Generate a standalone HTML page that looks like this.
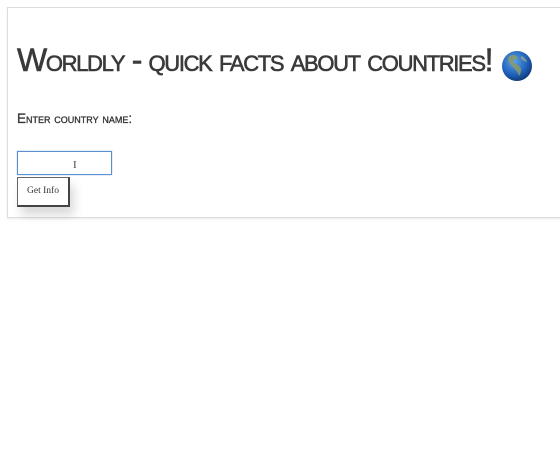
<!DOCTYPE html>
<html><head><style>
html,body{margin:0;padding:0;background:#fff;width:560px;height:450px;overflow:hidden;}
.card{position:absolute;left:7px;top:7px;width:600px;height:209px;border:1px solid #dcdcdc;box-shadow:0 1px 2px rgba(0,0,0,0.08);background:#fff;}
h1{position:absolute;left:17px;top:42px;margin:0;font:normal 32px "Liberation Sans",sans-serif;font-variant:small-caps;letter-spacing:-1.35px;color:#3a3a3a;white-space:nowrap;-webkit-text-stroke:0.6px #3a3a3a;}
.globe{position:absolute;left:501px;top:50px;}
.lbl{position:absolute;left:17px;top:111px;font:normal 13.5px "Liberation Sans",sans-serif;font-variant:small-caps;color:#333;white-space:nowrap;-webkit-text-stroke:0.3px #333;}
.inp{position:absolute;left:17px;top:151px;width:93px;height:22px;border:1px solid #5a8fd0;box-shadow:0 0 1px #7aa8e0;background:#fff;}
.cur{position:absolute;left:55px;top:7px;font:11px "Liberation Serif",serif;color:#444;}
.btn{position:absolute;left:17px;top:177px;width:50px;height:27px;border:1px solid #666;border-right:2px solid #444;border-bottom:2px solid #444;background:#fff;box-shadow:4px 8px 10px rgba(0,0,0,0.15);font:9.5px "Liberation Serif",serif;color:#333;text-align:center;line-height:27px;}
</style></head><body>
<div class="card"></div>
<h1>Worldly - quick facts about countries!</h1>
<svg class="globe" width="32" height="32" viewBox="0 0 32 32">
<defs><radialGradient id="g" cx="40%" cy="35%" r="65%"><stop offset="0" stop-color="#5da2ea"/><stop offset="0.7" stop-color="#1d5fb8"/><stop offset="1" stop-color="#123d7a"/></radialGradient></defs>
<circle cx="16" cy="16" r="15" fill="url(#g)"/>
<path d="M8 6 C12 4 16 5 17 8 C15 10 13 9 12 12 C14 14 17 14 19 17 C21 19 20 23 18 26 C17 22 14 20 12 17 C10 15 8 13 7 10 Z" fill="#8a9a6a" opacity="0.85"/>
<path d="M20 6 C23 7 25 9 26 12 C24 12 22 10 20 9 Z" fill="#9aa87a" opacity="0.8"/>
</svg>
<div class="lbl">Enter country name:</div>
<div class="inp"><span class="cur">I</span></div>
<div class="btn">Get Info</div>
</body></html>
